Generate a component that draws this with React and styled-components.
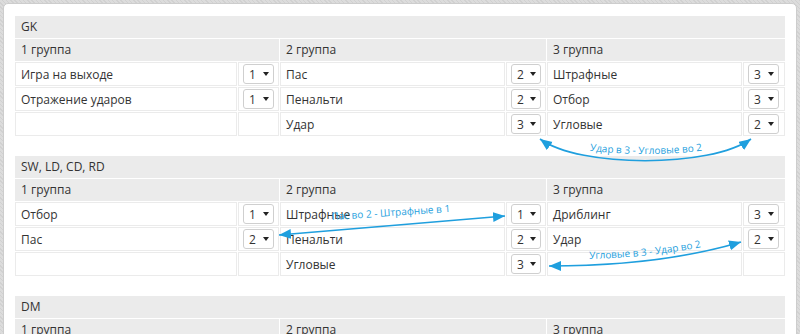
import React from 'react';
import styled, { createGlobalStyle } from 'styled-components';

const BLUE = '#1f9fde';

const GlobalStyle = createGlobalStyle`
  html, body {
    margin: 0;
    padding: 0;
  }
  body {
    background-color: #dcdcdc;
    background-image: repeating-linear-gradient(45deg, rgba(0, 0, 0, 0.05) 0 1px, transparent 1px 3px);
    font-family: 'Open Sans', 'DejaVu Sans', sans-serif;
    font-size: 12px;
    color: #333;
  }
`;

const Page = styled.div`
  position: relative;
  width: 800px;
  height: 334px;
  overflow: hidden;
  padding: 3px 3px 0;
  box-sizing: border-box;
`;

const Panel = styled.div`
  background: #fff;
  border: 1px solid #cdcdcd;
  border-radius: 5px;
  padding: 12px 11px 20px;
  min-height: 420px;
`;

const Section = styled.div`
  display: grid;
  grid-template-columns: 222px 41px 225px 40px 195px 42px;
  grid-template-rows: 22px 22px;
  grid-auto-rows: 24px;
  gap: 1px;
  margin-bottom: 20px;
`;

const SectionHeader = styled.div`
  grid-column: 1 / -1;
  background: #ebebeb;
  padding: 0 6px;
  line-height: 22px;
`;

const GroupHeader = styled.div`
  grid-column: span 2;
  background: #ebebeb;
  padding: 0 6px;
  line-height: 22px;
`;

const Cell = styled.div`
  box-sizing: border-box;
  border: 1px solid #ebebeb;
  display: flex;
  align-items: center;
  padding: 0 5px;
  white-space: nowrap;
`;

const SelectCell = styled(Cell)`
  padding: 0 4px;
`;

const SelectBox = styled.div`
  width: 31px;
  height: 20px;
  box-sizing: border-box;
  border: 1px solid #cfcfcf;
  border-radius: 3px;
  background: #fff;
  display: flex;
  align-items: center;
  justify-content: space-between;
  padding: 0 4px 0 5px;
  color: #333;

  &::after {
    content: '';
    border-left: 3px solid transparent;
    border-right: 3px solid transparent;
    border-top: 4px solid #222;
  }
`;

const Overlay = styled.svg`
  position: absolute;
  top: 0;
  left: 0;
  pointer-events: none;
`;

const NoteText = styled.text`
  fill: ${BLUE};
  font-family: 'Open Sans', 'DejaVu Sans', sans-serif;
  font-size: 10px;
`;

const sections = [
  {
    title: 'GK',
    groups: [
      [['Игра на выходе', 1], ['Отражение ударов', 1], null],
      [['Пас', 2], ['Пенальти', 2], ['Удар', 3]],
      [['Штрафные', 3], ['Отбор', 3], ['Угловые', 2]],
    ],
  },
  {
    title: 'SW, LD, CD, RD',
    groups: [
      [['Отбор', 1], ['Пас', 2], null],
      [['Штрафные', 1], ['Пенальти', 2], ['Угловые', 3]],
      [['Дриблинг', 3], ['Удар', 2], null],
    ],
  },
  {
    title: 'DM',
    groups: [
      [['Отбор', 1], ['Пас', 1], null],
      [['Дриблинг', 2], ['Удар', 2], ['Пенальти', 2]],
      [['Штрафные', 3], ['Угловые', 3], null],
    ],
  },
];

// arrows drawn over the table, in page pixels
const notes = [
  {
    id: 'n1',
    line: 'M 540 139 C 580 168 710 168 751 139',
    textPath: 'M 584 150 Q 646 158 708 150',
    text: 'Удар в 3 - Угловые во 2',
  },
  {
    id: 'n2',
    line: 'M 279 235 L 505 216',
    textPath: 'M 318 221 L 464 211',
    text: 'Пас во 2 - Штрафные в 1',
  },
  {
    id: 'n3',
    line: 'M 549 266 Q 660 266 741 242',
    textPath: 'M 584 259 Q 650 258 706 246',
    text: 'Угловые в 3 - Удар во 2',
  },
];

const Annotations = () => (
  <Overlay width="800" height="334" viewBox="0 0 800 334">
    <defs>
      <marker
        id="head"
        markerUnits="userSpaceOnUse"
        markerWidth="14"
        markerHeight="12"
        refX="12"
        refY="5"
        orient="auto-start-reverse"
      >
        <path d="M0 0 L12 5 L0 10 z" fill={BLUE} />
      </marker>
      {notes.map((n) => (
        <path key={n.id} id={n.id} d={n.textPath} fill="none" />
      ))}
    </defs>
    {notes.map((n) => (
      <g key={n.id}>
        <path
          d={n.line}
          fill="none"
          stroke={BLUE}
          strokeWidth="1.6"
          markerStart="url(#head)"
          markerEnd="url(#head)"
        />
        <NoteText>
          <textPath href={`#${n.id}`} startOffset="50%" textAnchor="middle">
            {n.text}
          </textPath>
        </NoteText>
      </g>
    ))}
  </Overlay>
);

const Row = ({ items }) =>
  items.map((item, g) => (
    <React.Fragment key={g}>
      <Cell>{item ? item[0] : ''}</Cell>
      <SelectCell>{item && <SelectBox>{item[1]}</SelectBox>}</SelectCell>
    </React.Fragment>
  ));

const App = () => (
  <Page>
    <GlobalStyle />
    <Panel>
      {sections.map((s) => (
        <Section key={s.title}>
          <SectionHeader>{s.title}</SectionHeader>
          <GroupHeader>1 группа</GroupHeader>
          <GroupHeader>2 группа</GroupHeader>
          <GroupHeader>3 группа</GroupHeader>
          {[0, 1, 2].map((r) => (
            <Row key={r} items={s.groups.map((grp) => grp[r])} />
          ))}
        </Section>
      ))}
    </Panel>
    <Annotations />
  </Page>
);

export default App;
